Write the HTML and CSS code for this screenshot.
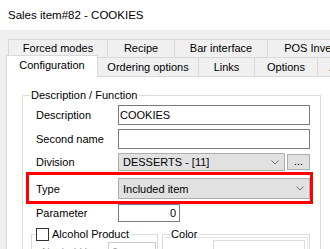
FILE: index.html
```html
<!DOCTYPE html>
<html lang="en">

<head>
  <meta charset="UTF-8">
  <title>Sales item#82 - COOKIES</title>
  <link rel="stylesheet" href="styles.css">
</head>

<body>
  <div class="window">
    <div class="titlebar">Sales item#82 - COOKIES</div>

    <div class="tabstrip">
      <div class="tabrow tabrow--back">
        <div class="tab tab--forced">Forced modes</div>
        <div class="tab tab--recipe">Recipe</div>
        <div class="tab tab--bar">Bar interface</div>
        <div class="tab tab--pos">POS Inventory</div>
      </div>
      <div class="tabrow tabrow--front">
        <div class="tab tab--active tab--config">Configuration</div>
        <div class="tab tab--ordering">Ordering options</div>
        <div class="tab tab--links">Links</div>
        <div class="tab tab--options">Options</div>
        <div class="tab tab--alcohol">Alcohol</div>
      </div>
    </div>

    <div class="page">
      <fieldset class="group group--desc">
        <legend>Description / Function</legend>

        <div class="field field--desc">
          <label>Description</label>
          <div class="textbox textbox--wide">COOKIES</div>
        </div>

        <div class="field field--second">
          <label>Second name</label>
          <div class="textbox textbox--wide"></div>
        </div>

        <div class="field field--division">
          <label>Division</label>
          <div class="combo combo--division">
            <span>DESSERTS - [11]</span>
            <svg class="chevron" width="8" height="5" viewBox="0 0 8 5">
              <path d="M0.5 0.5 L4 4 L7.5 0.5" fill="none" stroke="#707070" stroke-width="1" />
            </svg>
          </div>
          <div class="dots-btn">...</div>
        </div>

        <div class="field field--type">
          <label>Type</label>
          <div class="combo combo--type">
            <span>Included item</span>
            <svg class="chevron" width="8" height="5" viewBox="0 0 8 5">
              <path d="M0.5 0.5 L4 4 L7.5 0.5" fill="none" stroke="#707070" stroke-width="1" />
            </svg>
          </div>
        </div>

        <div class="field field--param">
          <label>Parameter</label>
          <div class="textbox textbox--number">0</div>
        </div>

        <div class="subgroups">
          <fieldset class="group group--alcohol">
            <legend><span class="checkbox"></span>Alcohol Product</legend>
            <div class="field field--hcount">
              <label class="disabled">Alcohol Hcount</label>
              <div class="textbox textbox--disabled">0</div>
            </div>
          </fieldset>

          <fieldset class="group group--color">
            <legend>Color</legend>
            <div class="color-frame">
              <div class="color-box"></div>
            </div>
          </fieldset>
        </div>
      </fieldset>
    </div>
  </div>
</body>

</html>
```

FILE: styles.css
```css
* {
  margin: 0;
  padding: 0;
  box-sizing: border-box;
}

body {
  background-color: #f0f0f0;
  font-family: "Liberation Sans", Arial, sans-serif;
  font-size: 11px;
  color: #000;
  overflow: hidden;
  width: 330px;
  height: 249px;
}

.titlebar {
  height: 30px;
  line-height: 30px;
  padding-left: 8px;
  font-size: 11.5px;
  background-color: #fff;
}

/* tabs */

.tabstrip {
  padding-top: 9px;
  white-space: nowrap;
}

.tabrow {
  display: flex;
}

.tab {
  flex: none;
  text-align: center;
  background-color: #f0f0f0;
  border-top: 1px solid #d9d9d9;
}

.tabrow--back {
  margin-left: 8px;
  height: 18px;
}

.tabrow--back .tab {
  border-left: 1px solid #d9d9d9;
  line-height: 17px;
}

.tab--forced { width: 99px; }
.tab--recipe { width: 67px; }
.tab--bar { width: 93px; }

.tab--pos {
  width: 106px;
  border-right: 1px solid #d9d9d9;
}

.tabrow--front {
  margin-left: 6px;
  height: 19px;
}

.tabrow--front .tab {
  border-right: 1px solid #d9d9d9;
  line-height: 18px;
}

.tab--active {
  position: relative;
  z-index: 1;
  height: 22px;
  margin-top: -2px;
  background-color: #fff;
  border-left: 1px solid #d9d9d9;
  line-height: 19px;
}

.tab--config { width: 92px; }
.tab--ordering { width: 101px; }
.tab--links { width: 56px; }
.tab--options { width: 63px; }
.tab--alcohol { width: 60px; }

.page {
  margin-left: 6px;
  height: 200px;
  background-color: #fff;
  border-left: 1px solid #d9d9d9;
  border-top: 1px solid #d9d9d9;
}

/* group boxes */

.group {
  border: 1px solid #dcdcdc;
  padding: 0;
  min-width: 0;
}

.group legend {
  margin-left: 7px;
  padding: 0 1px;
  line-height: 14px;
}

.group--desc {
  width: 299px;
  margin: 11px 0 0 15px;
  padding: 0 10px 0 13px;
}

.group--desc > legend {
  margin-left: -6px;
}

/* form rows */

.field {
  display: flex;
  align-items: center;
}

.field label {
  flex: none;
  width: 82px;
  white-space: nowrap;
  overflow: hidden;
}

.field--desc { margin-top: 3px; }
.field--second { margin-top: 4px; }
.field--division { margin-top: 4px; }
.field--type { margin-top: 7px; position: relative; }
.field--param { margin-top: 5px; }

.textbox {
  height: 20px;
  line-height: 18px;
  padding: 0 1px;
  border: 1px solid #7a7a7a;
  background-color: #fff;
}

.textbox--wide {
  width: 192px;
}

.textbox--number {
  width: 62px;
  height: 18px;
  line-height: 16px;
  padding-right: 3px;
  text-align: right;
}

.combo {
  display: flex;
  align-items: center;
  justify-content: space-between;
  padding: 0 5px 0 4px;
  background-color: #e1e1e1;
  border: 1px solid #adadad;
}

.combo--division {
  width: 167px;
  height: 18px;
}

.combo--type {
  width: 192px;
  height: 21px;
  padding-right: 5px;
}

.chevron {
  flex: none;
}

.dots-btn {
  width: 23px;
  height: 16px;
  margin-left: 2px;
  line-height: 12px;
  text-align: center;
  background-color: #e1e1e1;
  border: 1px solid #adadad;
}

/* red highlight around the Type row */
.field--type::after {
  content: "";
  position: absolute;
  top: -6px;
  left: -10px;
  right: -3px;
  bottom: -5px;
  border: 3px solid #ff0000;
}

/* lower groups */

.subgroups {
  display: flex;
  align-items: flex-start;
  gap: 4px;
  margin: 5px 0 0 -5px;
}

.group--alcohol {
  width: 128px;
  height: 40px;
}

.group--alcohol legend {
  display: flex;
  align-items: center;
  margin-left: 4px;
  padding: 0 2px 0 0;
}

.checkbox {
  display: inline-block;
  width: 13px;
  height: 13px;
  margin-right: 3px;
  border: 1px solid #333;
  background-color: #fff;
}

.field--hcount {
  margin-top: 1px;
  padding-left: 8px;
}

.field--hcount label {
  width: 68px;
}

.disabled {
  color: #a0a0a0;
}

.textbox--disabled {
  width: 48px;
  padding-left: 3px;
  color: #a0a0a0;
  border-color: #cccccc;
}

.group--color {
  width: 149px;
  height: 40px;
}

.color-frame {
  margin: -4px 1px 0 2px;
  height: 20px;
  border-top: 1px solid #e3e3e3;
  border-right: 1px solid #e3e3e3;
  padding: 2px 2px 0 0;
}

.color-box {
  margin-left: 48px;
  height: 16px;
  border-top: 1px solid #dcdcdc;
  border-left: 1px solid #dcdcdc;
  border-right: 1px solid #dcdcdc;
}
```
